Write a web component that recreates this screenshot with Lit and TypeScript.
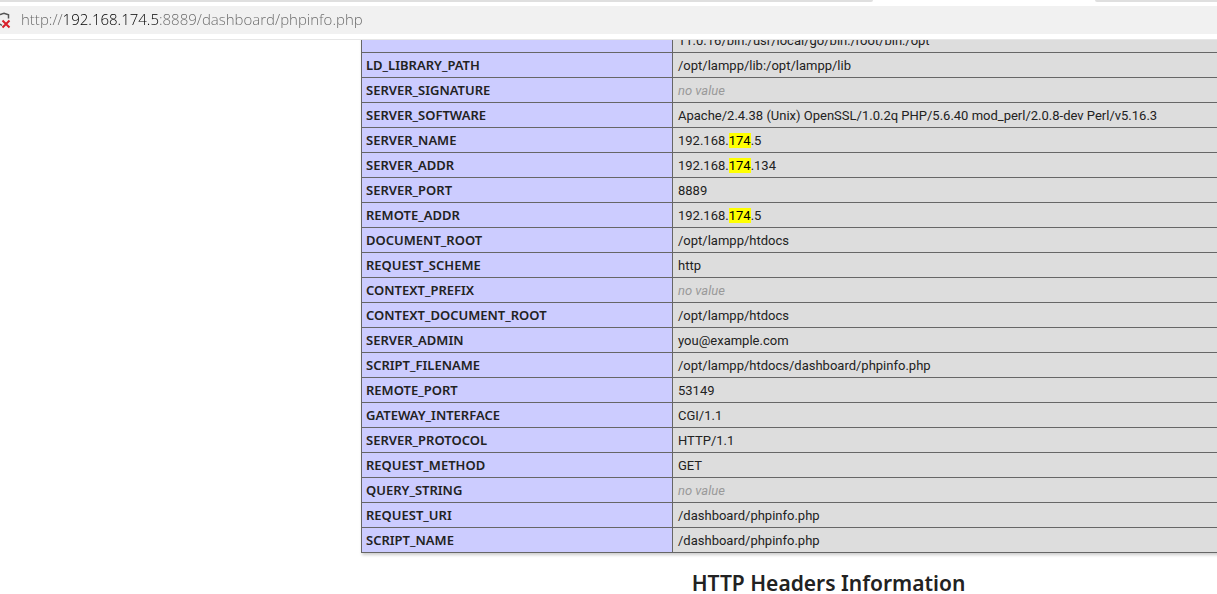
import { LitElement, html, css, nothing } from "lit";
import { customElement } from "lit/decorators.js";

type Row = [name: string, value: string | null];

const ROWS: Row[] = [
  ["LD_LIBRARY_PATH", "/opt/lampp/lib:/opt/lampp/lib"],
  ["SERVER_SIGNATURE", null],
  ["SERVER_SOFTWARE", "Apache/2.4.38 (Unix) OpenSSL/1.0.2q PHP/5.6.40 mod_perl/2.0.8-dev Perl/v5.16.3"],
  ["SERVER_NAME", "192.168.174.5"],
  ["SERVER_ADDR", "192.168.174.134"],
  ["SERVER_PORT", "8889"],
  ["REMOTE_ADDR", "192.168.174.5"],
  ["DOCUMENT_ROOT", "/opt/lampp/htdocs"],
  ["REQUEST_SCHEME", "http"],
  ["CONTEXT_PREFIX", null],
  ["CONTEXT_DOCUMENT_ROOT", "/opt/lampp/htdocs"],
  ["SERVER_ADMIN", "you@example.com"],
  ["SCRIPT_FILENAME", "/opt/lampp/htdocs/dashboard/phpinfo.php"],
  ["REMOTE_PORT", "53149"],
  ["GATEWAY_INTERFACE", "CGI/1.1"],
  ["SERVER_PROTOCOL", "HTTP/1.1"],
  ["REQUEST_METHOD", "GET"],
  ["QUERY_STRING", null],
  ["REQUEST_URI", "/dashboard/phpinfo.php"],
  ["SCRIPT_NAME", "/dashboard/phpinfo.php"],
];

const FIND = "174";

@customElement("browser-bar")
export class BrowserBar extends LitElement {
  static styles = css`
    :host {
      display: block;
      background: #fff;
      border-bottom: 1px solid #e6e6e6;
    }
    .tabs {
      display: grid;
      grid-template-columns: 873fr 222fr 122fr;
      height: 2px;
      margin-bottom: 4px;
    }
    .tab { background: #dfdfdf; }
    .tab.first { border-bottom-right-radius: 2px; }
    .tab.last { border-bottom-left-radius: 2px; }
    .tab.active { background: #fff; }
    .address {
      display: flex;
      align-items: center;
      height: 28px;
      margin-bottom: 5px;
      background: #f1f1f1;
    }
    .icon { flex: none; display: block; }
    .url {
      flex: 1;
      min-width: 0;
      height: 26px;
      margin: 0 0 2px 9px;
      padding: 0;
      border: 0;
      outline: 0;
      font: 300 15px/26px "Open Sans", "Noto Sans", sans-serif;
      color: #666;
      background: linear-gradient(90deg, #666 42px, #000 42px, #000 138px, #666 138px);
      -webkit-background-clip: text;
      background-clip: text;
      -webkit-text-fill-color: transparent;
    }
  `;

  render() {
    return html`
      <div class="tabs">
        <div class="tab first"></div>
        <div class="tab active"></div>
        <div class="tab last"></div>
      </div>
      <div class="address">
        <svg class="icon" width="12" height="20" viewBox="0 0 12 20" aria-hidden="true">
          <path d="M0 4.5C2 4.5 3 3.2 4 3.2L8.5 4.7V8.5M0 14L2 15.5" fill="none" stroke="#555" stroke-width="1.5" />
          <path d="M2.5 10.5L9.5 17.5M9.5 10.5L2.5 17.5" fill="none" stroke="#d8202a" stroke-width="2" />
        </svg>
        <input class="url" type="text" aria-label="Address" spellcheck="false"
          .value=${"http://192.168.174.5:8889/dashboard/phpinfo.php"} />
      </div>
    `;
  }
}

@customElement("app-root")
export class AppRoot extends LitElement {
  static styles = css`
    :host {
      display: flex;
      flex-direction: column;
      height: 100vh;
      overflow: hidden;
      background: #fff;
      color: #222;
      font: 13px/16px "Noto Sans", "Open Sans", sans-serif;
    }
    browser-bar { flex: none; }
    .page {
      flex: 1;
      min-height: 0;
      overflow: hidden;
      padding-left: 361px;
    }
    .content { width: 935px; }
    .vars {
      width: 100%;
      margin-top: -13px;
      table-layout: fixed;
      border-collapse: collapse;
      box-shadow: 1px 2px 3px #ccc;
    }
    .name-col { width: 311px; }
    .name, .value {
      padding: 4px;
      border: 1px solid #666;
      text-align: left;
      vertical-align: middle;
    }
    .name { background: #ccf; font-weight: 600; }
    .value {
      padding: 5px 5px 3px;
      background: #ddd;
      font-family: Roboto, "Noto Sans", sans-serif;
    }
    .none { color: #999; }
    .hit { background: #ff0; color: #000; }
    .title {
      margin: 19px 0;
      font-size: 21px;
      line-height: 22px;
      font-weight: 600;
      text-align: center;
    }
  `;

  private renderValue(value: string | null) {
    if (value === null) return html`<i class="none">no value</i>`;
    return value
      .split(FIND)
      .map((part, i) => html`${i > 0 ? html`<mark class="hit">${FIND}</mark>` : nothing}${part}`);
  }

  render() {
    return html`
      <browser-bar></browser-bar>
      <main class="page">
        <div class="content">
          <table class="vars">
            <colgroup><col class="name-col" /><col /></colgroup>
            <tbody>
              <tr>
                <th class="name" scope="row"></th>
                <td class="value">11.0.16/bin:/usr/local/go/bin:/root/bin:/opt</td>
              </tr>
              ${ROWS.map(
                ([name, value]) => html`<tr>
                  <th class="name" scope="row">${name}</th>
                  <td class="value">${this.renderValue(value)}</td>
                </tr>`
              )}
            </tbody>
          </table>
          <h2 class="title">HTTP Headers Information</h2>
        </div>
      </main>
    `;
  }
}
